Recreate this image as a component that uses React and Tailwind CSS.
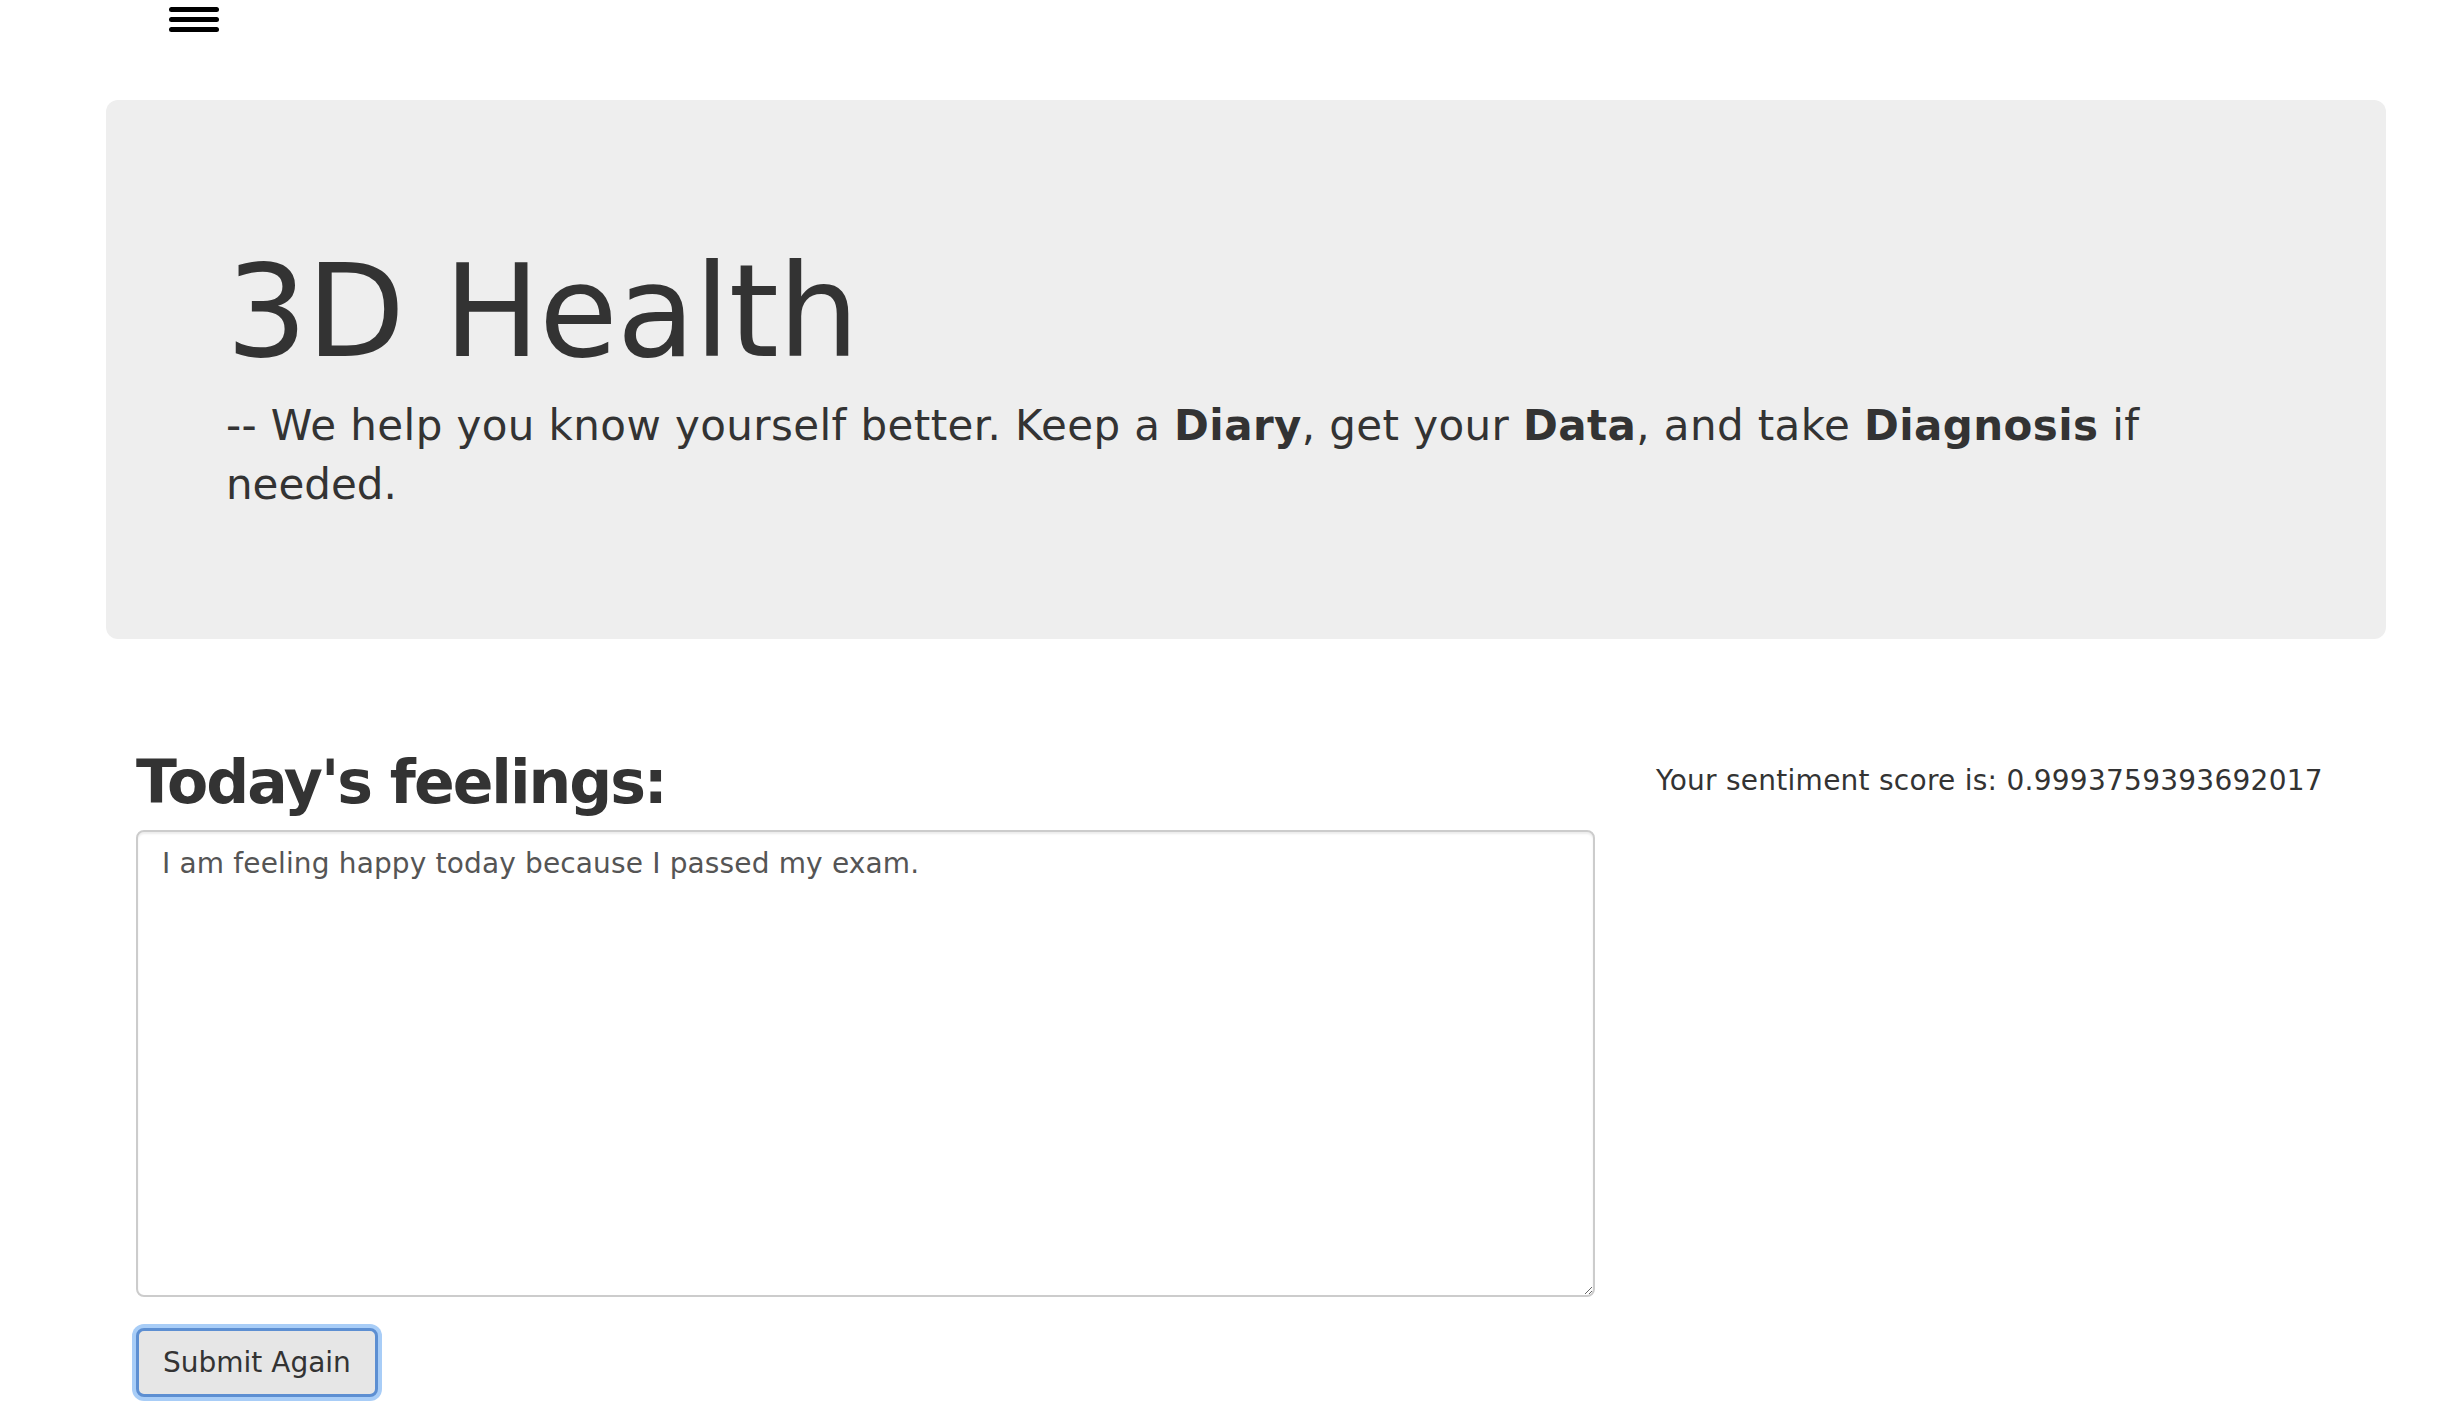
import React, { useState } from 'react';

const App = () => {
  const [entry, setEntry] = useState('I am feeling happy today because I passed my exam.');
  const score = 0.9993759393692017;

  return (
    <div className="min-h-screen bg-white font-['DejaVu_Sans',Verdana,sans-serif] text-[#333333]">
      {/* Nav toggle */}
      <div className="h-[100px] pl-[169px] pt-[7px]">
        <button className="flex flex-col gap-[5px]" aria-label="Menu">
          <span className="block h-[5px] w-[50px] rounded-full bg-black" />
          <span className="block h-[5px] w-[50px] rounded-full bg-black" />
          <span className="block h-[5px] w-[50px] rounded-full bg-black" />
        </button>
      </div>

      {/* Jumbotron */}
      <div className="ml-[106px] h-[539px] w-[2280px] rounded-[12px] bg-[#eeeeee] pl-[120px] pt-[137px]">
        <h1 className="text-[128px] leading-[149px] font-normal tracking-[-1px]">3D Health</h1>
        <p className="mt-[10px] text-[42px] leading-[59.3px]">
          <span className="whitespace-nowrap tracking-[0.4px]">
            -- We help you know yourself better. Keep a <b>Diary</b>, get your <b>Data</b>, and take <b>Diagnosis</b> if
          </span>
          <br />
          needed.
        </p>
      </div>

      {/* Diary form */}
      <div className="mt-[108px] flex pl-[136px]">
        <div className="w-[1459px]">
          <h2 className="text-[60px] leading-[70px] font-bold tracking-[-2px]">Today's feelings:</h2>
          <textarea
            className="mt-[13px] block h-[467px] w-full rounded-[8px] border-2 border-[#cccccc] px-[24px] pt-[12px] text-[28px] leading-[40px] tracking-[0.15px] text-[#555555] shadow-[inset_0_2px_2px_rgba(0,0,0,0.075)] outline-none"
            value={entry}
            onChange={(e) => setEntry(e.target.value)}
          />
          <div className="mt-[31px]">
            <button className="h-[69px] rounded-[8px] border-[3px] border-[#5d8fd2] bg-[#e6e6e6] px-[24px] text-[28px] leading-[40px] text-[#333333] shadow-[0_0_0_4px_#a8cdf7]">
              Submit Again
            </button>
          </div>
        </div>
        <div className="ml-[61px] pt-[14px]">
          <p className="text-[28px] leading-[40px] tracking-[0.26px]">Your sentiment score is: {score}</p>
        </div>
      </div>
    </div>
  );
};

export default App;
